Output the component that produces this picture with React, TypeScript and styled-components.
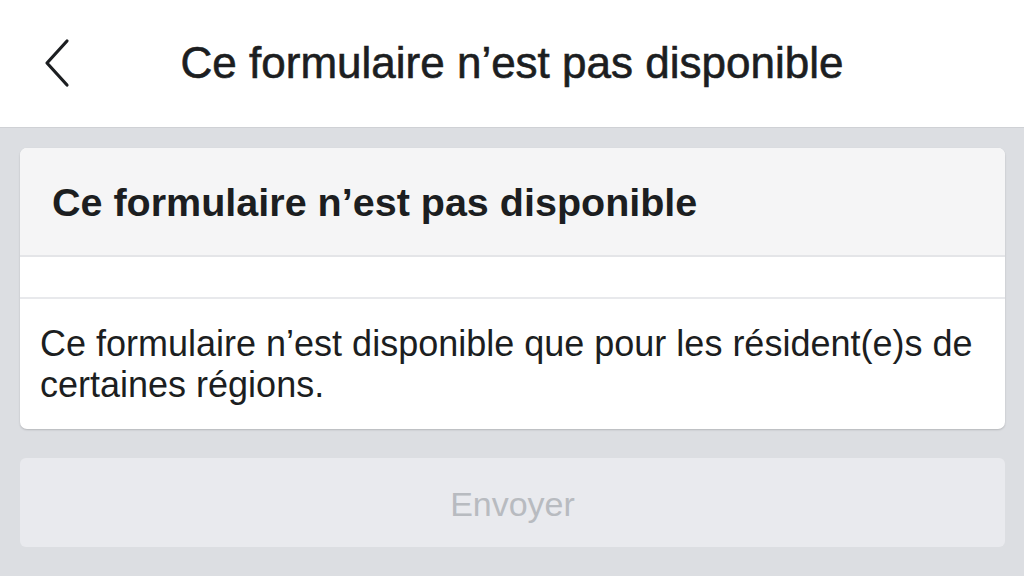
import React from "react";
import styled, { createGlobalStyle } from "styled-components";

const Global = createGlobalStyle`
  html, body { margin: 0; padding: 0; background: #dcdee2; }
  body { font-family: "Liberation Sans", Arial, sans-serif; -webkit-font-smoothing: antialiased; }
  * { box-sizing: border-box; }
`;

const Page = styled.div`
  width: 1024px;
  height: 576px;
  display: flex;
  flex-direction: column;
  background: #dcdee2;
  overflow: hidden;
`;

const Header = styled.header`
  height: 128px;
  flex: none;
  background: #ffffff;
  border-bottom: 1px solid #cfd1d5;
  display: grid;
  grid-template-columns: 120px 1fr 120px;
  align-items: center;
`;

const BackButton = styled.button`
  border: none;
  background: none;
  padding: 0;
  margin-left: 37px;
  width: 40px;
  height: 50px;
  display: flex;
  align-items: center;
  justify-content: center;
  color: #1c1e21;
  margin-top: -2px;
`;

const Title = styled.h1`
  margin: 0;
  text-align: center;
  font-size: 44px;
  font-weight: 400;
  -webkit-text-stroke: 0.6px #1c1e21;
  color: #1c1e21;
  margin-top: -2px;
`;

const Content = styled.main`
  flex: 1;
  padding: 20px 19px 0 20px;
  display: flex;
  flex-direction: column;
  gap: 29px;
`;

const Card = styled.section`
  background: #ffffff;
  border-radius: 7px;
  box-shadow: 0 1px 2px rgba(0, 0, 0, 0.18);
  overflow: hidden;
`;

const CardHeader = styled.div`
  height: 109px;
  background: #f5f5f6;
  border-bottom: 2px solid #e4e5e8;
  display: flex;
  align-items: center;
  padding: 0 32px;
`;

const CardTitle = styled.h2`
  margin: 0;
  font-size: 39.5px;
  font-weight: 700;
  color: #1c1e21;
  margin-top: 2px;
`;

const Spacer = styled.div`
  height: 42px;
  border-bottom: 2px solid #e8e9ec;
`;

const CardBody = styled.p`
  margin: 0;
  padding: 24px 20px 24px 20px;
  font-size: 36px;
  line-height: 41px;
  color: #1c1e21;
`;

const SubmitButton = styled.button`
  height: 89px;
  border: none;
  border-radius: 6px;
  background: #e9eaee;
  color: #b8bbc0;
  font-family: "Liberation Sans", Arial, sans-serif;
  font-size: 34px;
  font-weight: 400;
  display: flex;
  align-items: center;
  justify-content: center;
  padding-top: 4px;
  cursor: default;
`;

export default function App() {
  return (
    <>
      <Global />
      <Page>
        <Header>
          <BackButton aria-label="Retour">
            <svg width="30" height="50" viewBox="0 0 30 50" fill="none">
              <path d="M25 3 L5 25 L25 47" stroke="#1c1e21" strokeWidth="3.2" strokeLinecap="round" strokeLinejoin="round" />
            </svg>
          </BackButton>
          <Title>Ce formulaire n’est pas disponible</Title>
          <div />
        </Header>
        <Content>
          <Card>
            <CardHeader>
              <CardTitle>Ce formulaire n’est pas disponible</CardTitle>
            </CardHeader>
            <Spacer />
            <CardBody>
              Ce formulaire n’est disponible que pour les résident(e)s de certaines régions.
            </CardBody>
          </Card>
          <SubmitButton disabled>Envoyer</SubmitButton>
        </Content>
      </Page>
    </>
  );
}
